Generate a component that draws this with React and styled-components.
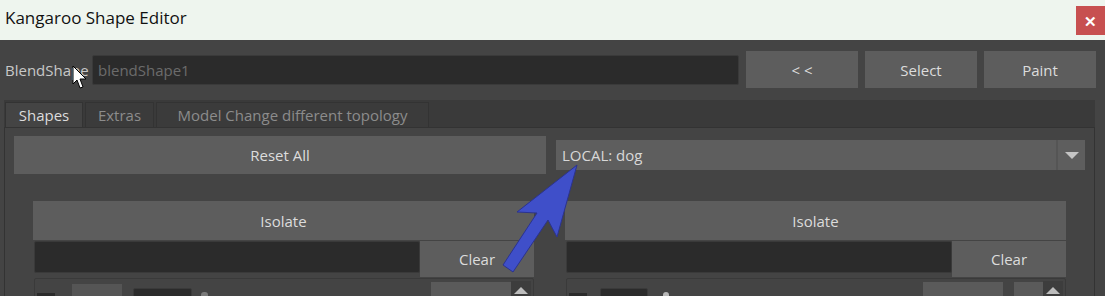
import React from "react";
import styled, { createGlobalStyle } from "styled-components";

const GlobalStyle = createGlobalStyle`
  html, body {
    margin: 0;
    padding: 0;
    background: #444444;
    overflow: hidden;
  }
  body {
    font-family: "Open Sans", "Noto Sans", sans-serif;
    font-size: 15px;
    color: #d2d2d2;
  }
  * { box-sizing: border-box; }
`;

const Window = styled.div`
  position: relative;
  width: 1105px;
  height: 296px;
  overflow: hidden;
  background: #444444;
`;

const TitleBar = styled.div`
  height: 40px;
  background: #eef5ee;
  display: flex;
  align-items: flex-start;
  justify-content: space-between;
`;

const Title = styled.div`
  padding: 6px 0 0 5px;
  font-size: 17px;
  color: #111;
  line-height: 24px;
`;

const CloseButton = styled.div`
  width: 29px;
  height: 29px;
  margin-top: 6px;
  background: #c75050;
  color: #fff;
  font-weight: bold;
  font-size: 15px;
  display: flex;
  align-items: center;
  justify-content: center;
`;

const TopRow = styled.div`
  display: flex;
  align-items: center;
  height: 37px;
  margin-top: 11px;
  padding: 0 9px 0 5px;
  gap: 7px;
`;

const Label = styled.div`
  color: #c8c8c8;
  width: 80px;
  white-space: nowrap;
`;

const TextField = styled.div`
  flex: ${(p) => (p.$grow ? 1 : "none")};
  height: ${(p) => p.$h || 30}px;
  background: #2b2b2b;
  border: 1px solid #3a3a3a;
  border-radius: 2px;
  color: #6b6b6b;
  padding-left: 5px;
  display: flex;
  align-items: center;
`;

const Button = styled.div`
  width: ${(p) => (p.$w ? `${p.$w}px` : "auto")};
  flex: ${(p) => (p.$grow ? 1 : "none")};
  height: ${(p) => p.$h || 37}px;
  background: #5d5d5d;
  color: #dcdcdc;
  display: flex;
  align-items: center;
  justify-content: center;
  white-space: nowrap;
`;

const TabBar = styled.div`
  display: flex;
  margin: 12px 10px 0 4px;
  height: 27px;
  padding-top: 2px;
  background: #3a3a3a;
  gap: 2px;
`;

const Tab = styled.div`
  width: ${(p) => p.$w}px;
  height: 25px;
  margin-left: ${(p) => (p.$first ? 1 : 0)}px;
  background: ${(p) => (p.$active ? "#444444" : "#3b3b3b")};
  border: 1px solid #333;
  border-bottom: none;
  color: ${(p) => (p.$active ? "#dcdcdc" : "#8c8c8c")};
  display: flex;
  align-items: center;
  justify-content: center;
  white-space: nowrap;
`;

const Pane = styled.div`
  margin: 0 10px 0 4px;
  border: 1px solid #333;
  border-bottom: none;
  height: 200px;
  padding: 8px 9px 0 9px;
`;

const ResetRow = styled.div`
  display: flex;
  align-items: center;
  gap: 10px;
  height: 38px;
`;

const Combo = styled.div`
  flex: 1;
  height: 30px;
  background: #5e5e5e;
  display: flex;
  align-items: stretch;
`;

const ComboText = styled.div`
  flex: 1;
  padding-left: 6px;
  display: flex;
  align-items: center;
  color: #d8d8d8;
`;

const ComboArrow = styled.div`
  width: 29px;
  border-left: 2px solid #555;
  display: flex;
  align-items: center;
  justify-content: center;
  &::after {
    content: "";
    border-left: 7px solid transparent;
    border-right: 7px solid transparent;
    border-top: 7px solid #c4c4c4;
  }
`;

const Columns = styled.div`
  display: grid;
  grid-template-columns: 1fr 1fr;
  gap: 31px;
  margin: 27px 19px 0 19px;
`;

const Column = styled.div`
  display: flex;
  flex-direction: column;
`;

const ClearRow = styled.div`
  display: flex;
  align-items: flex-start;
  margin-top: 1px;
  padding-left: 1px;
`;

const Frame = styled.div`
  margin-top: 1px;
  margin-left: 1px;
  height: 40px;
  border: 1px solid #3a3a3a;
  border-radius: 2px;
  display: flex;
  align-items: flex-start;
  padding: 2px 2px 0 2px;
`;

const Chip = styled.div`
  width: ${(p) => p.$w}px;
  height: 30px;
  margin-left: ${(p) => p.$ml || 0}px;
  margin-top: ${(p) => p.$mt || 0}px;
  background: ${(p) => p.$bg};
  border: ${(p) => (p.$border ? "1px solid #3a3a3a" : "none")};
  border-radius: ${(p) => p.$r || 0}px;
`;

const Spacer = styled.div`
  flex: 1;
`;

const SpinUp = styled.div`
  width: 20px;
  height: 30px;
  background: #3d3d3d;
  display: flex;
  justify-content: center;
  padding-top: 6px;
  &::after {
    content: "";
    height: 0;
    border-left: 7px solid transparent;
    border-right: 7px solid transparent;
    border-bottom: 7px solid #bdbdbd;
  }
`;

const Overlay = styled.svg`
  position: absolute;
  left: 0;
  top: 0;
  pointer-events: none;
`;

const Side = ({ handle }) => (
  <Column>
    <Button $h={39}>Isolate</Button>
    <ClearRow>
      <TextField $grow $h={32} />
      <Button $w={114} $h={36}>Clear</Button>
    </ClearRow>
    <Frame>
      <Chip $w={18} $mt={12} $bg="#2b2b2b" />
      {handle ? (
        <>
          <Chip $w={48} $ml={13} $mt={7} $bg="#2b2b2b" $border $r={2} />
          <Chip $w={6} $ml={15} $mt={11} $bg="#b8b8b8" $r={3} />
        </>
      ) : (
        <>
          <Chip $w={50} $ml={17} $mt={3} $bg="#555555" />
          <Chip $w={59} $ml={11} $mt={7} $bg="#2b2b2b" $border $r={2} />
          <Chip $w={7} $ml={9} $mt={11} $bg="#7a7a7a" $r={3} />
        </>
      )}
      <Spacer />
      <Chip $w={80} $mt={1} $bg="#5a5a5a" />
      {handle && <Chip $w={29} $ml={11} $mt={1} $bg="#5a5a5a" />}
      <SpinUp />
    </Frame>
  </Column>
);

export default function App() {
  return (
    <Window>
      <GlobalStyle />
      <TitleBar>
        <Title>Kangaroo Shape Editor</Title>
        <CloseButton>✕</CloseButton>
      </TitleBar>
      <TopRow>
        <Label>BlendShape</Label>
        <TextField $grow>blendShape1</TextField>
        <Button $w={112}>&lt; &lt;</Button>
        <Button $w={112}>Select</Button>
        <Button $w={112}>Paint</Button>
      </TopRow>
      <TabBar>
        <Tab $active $first $w={78}>Shapes</Tab>
        <Tab $w={69}>Extras</Tab>
        <Tab $w={273}>Model Change different topology</Tab>
      </TabBar>
      <Pane>
        <ResetRow>
          <Button $w={532} $h={38}>Reset All</Button>
          <Combo>
            <ComboText>LOCAL: dog</ComboText>
            <ComboArrow />
          </Combo>
        </ResetRow>
        <Columns>
          <Side />
          <Side handle />
        </Columns>
      </Pane>

      <Overlay width="1105" height="296" viewBox="0 0 1105 296">
        <polygon
          points="577,165 517,212 537,213 503,265 513,272 548,220 557,237"
          fill="#3f4fc9"
          stroke="#2b3390"
          strokeWidth="1"
          strokeLinejoin="round"
        />
        <path
          d="M73 66 L73 84 L77 80 L80 88 L83 87 L80 79 L86 79 Z"
          fill="#ffffff"
          stroke="#000000"
          strokeWidth="1"
          strokeLinejoin="round"
        />
      </Overlay>
    </Window>
  );
}
